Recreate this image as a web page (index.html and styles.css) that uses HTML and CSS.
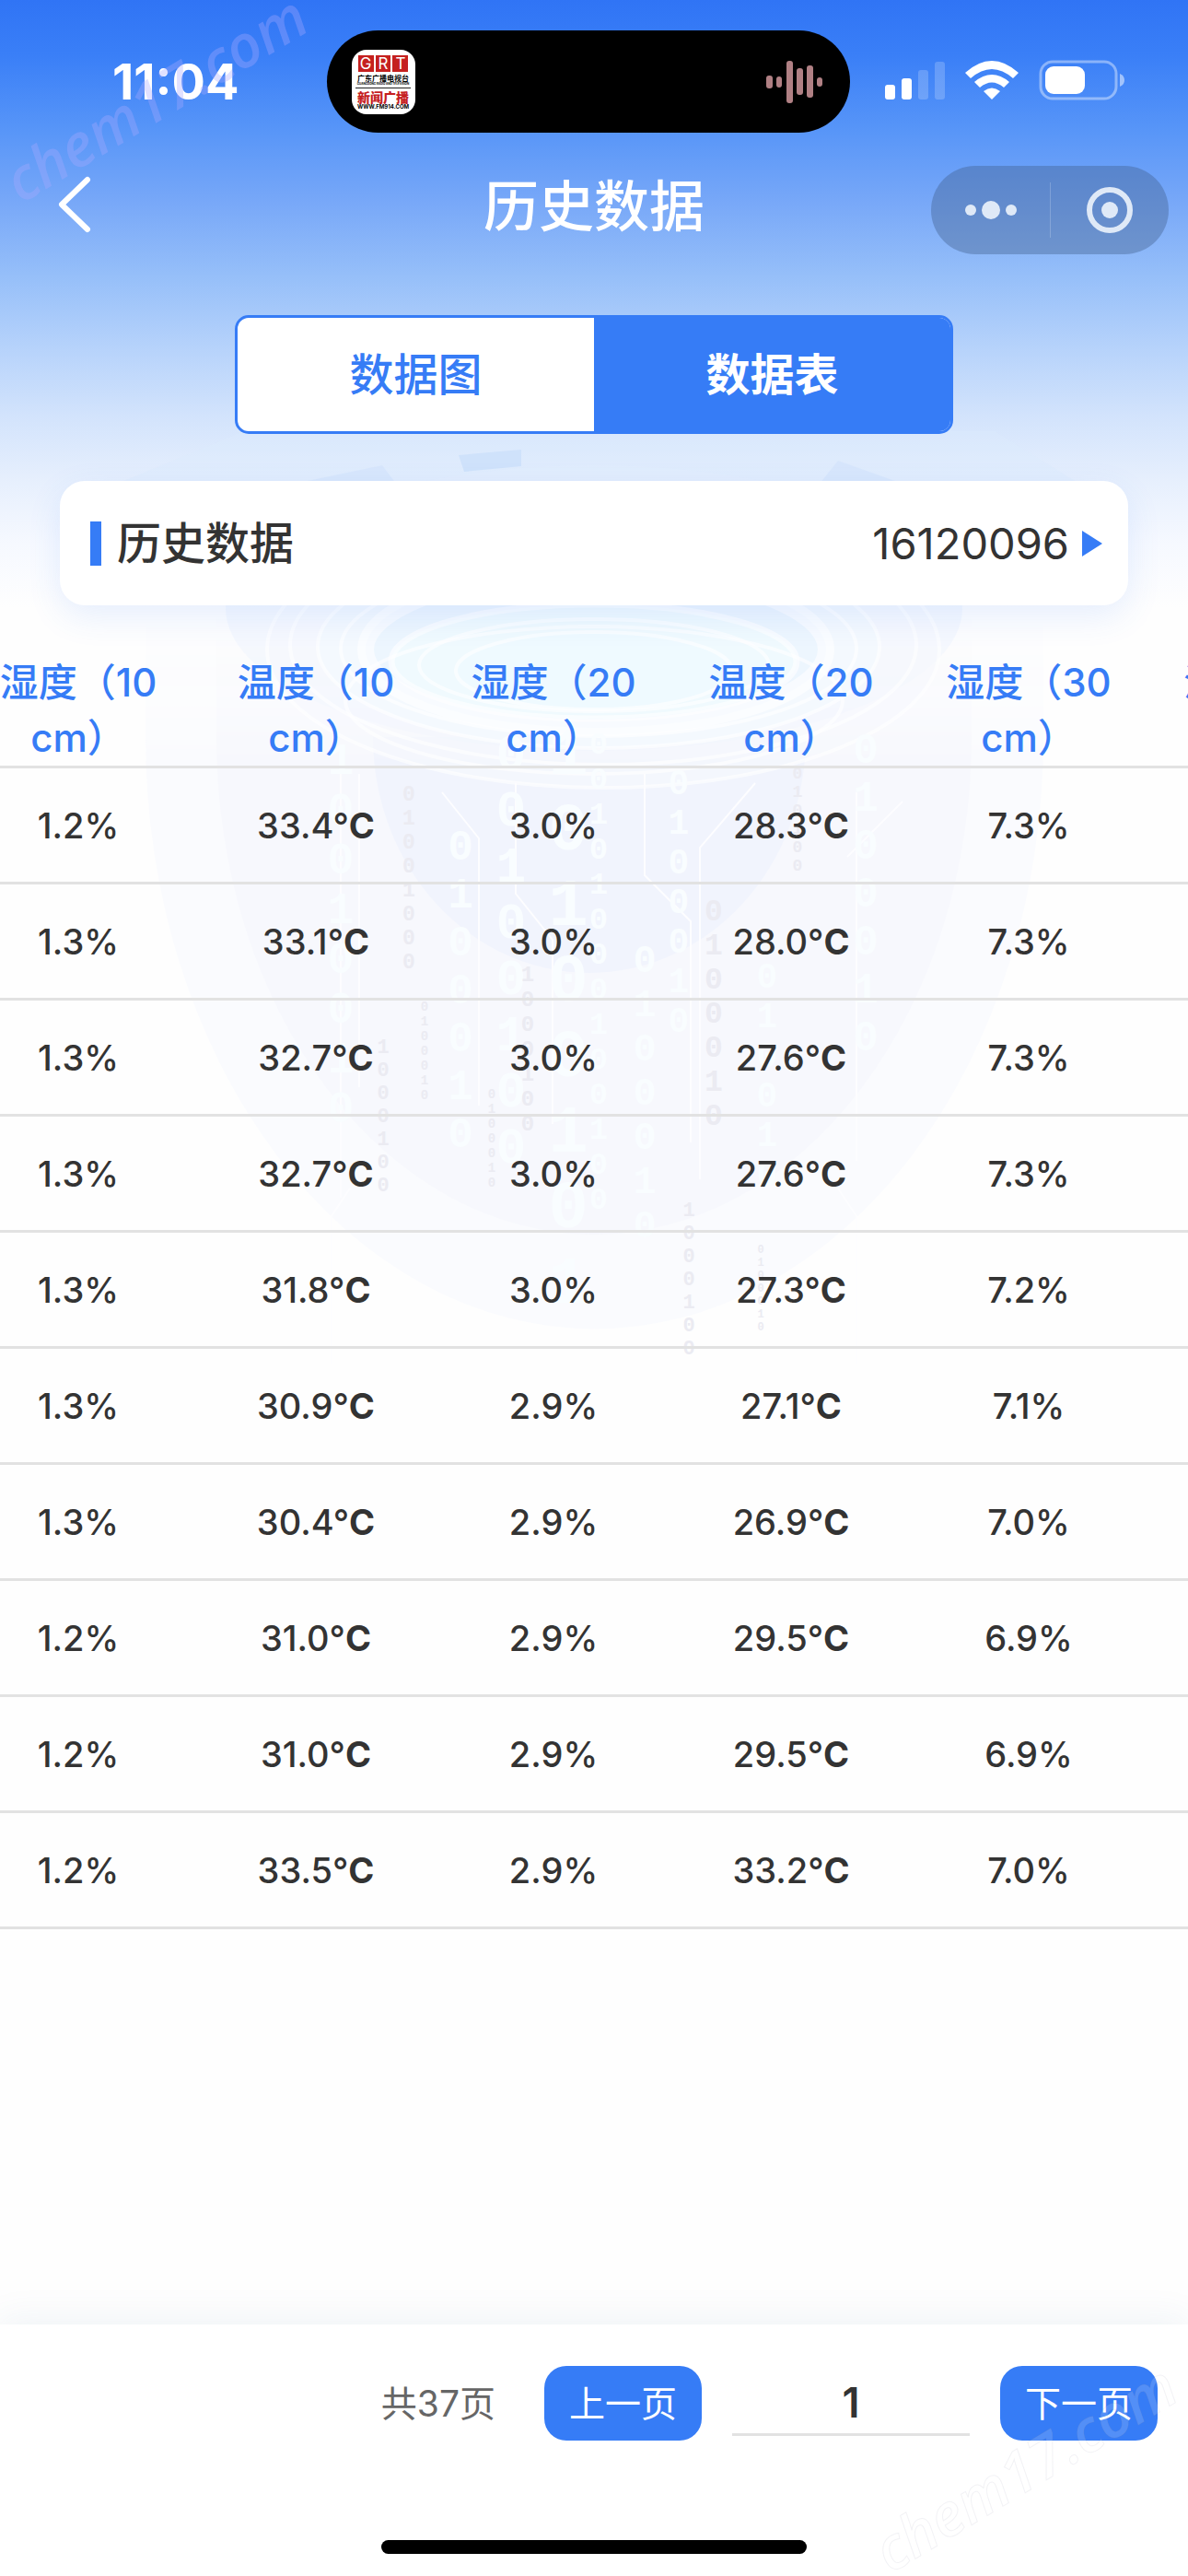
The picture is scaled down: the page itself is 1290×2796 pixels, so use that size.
FILE: index.html
```html
<!DOCTYPE html>
<html lang="zh-CN">
<head>
    <meta charset="UTF-8">
    <meta name="viewport" content="width=device-width, initial-scale=1.0">
    <title>历史数据</title>
    <link rel="stylesheet" href="styles.css">
</head>
<body>
    <svg class="backdrop" viewBox="0 0 1290 1700" aria-hidden="true">
        <defs>
            <linearGradient id="fade" x1="0" y1="660" x2="0" y2="830" gradientUnits="userSpaceOnUse">
                <stop offset="0" stop-color="#fff" stop-opacity="0"/>
                <stop offset="1" stop-color="#fff"/>
            </linearGradient>
            <mask id="fade-in" maskUnits="userSpaceOnUse" x="0" y="600" width="1290" height="1100">
                <rect x="0" y="600" width="1290" height="1100" fill="url(#fade)"/>
            </mask>
        </defs>
        <g mask="url(#fade-in)">
            <path fill="#fafbfe" d="M158 660V800A487 642 0 0 0 1133 800V660Z"/>
            <path fill="#f7f8fd" d="M235 660V800A410 540 0 0 0 1055 800V660Z"/>
            <path fill="#f1f4fd" d="M405 800A235 256 0 0 0 875 800Z"/>
        </g>
        <g class="rings">
            <path d="M115 530 L265 468 H1080 L1180 530Z" fill="#dceafd" fill-opacity=".4" stroke="none"/>
            <path d="M498 494l68-6v18l-62 6z" fill="#cfe2fb" stroke="none"/>
            <path d="M320 525l95-20 15 20zM890 525l20-25 70 25z" fill="#d2e3fc" fill-opacity=".6" stroke="none"/>
            <ellipse cx="645" cy="660" rx="400" ry="155" fill="#e4effe" fill-opacity=".3" stroke="none"/>
            <ellipse cx="655" cy="705" rx="365" ry="150" fill="#f6f9fe" fill-opacity=".6"/>
            <ellipse cx="655" cy="700" rx="340" ry="130"/>
            <ellipse cx="650" cy="702" rx="305" ry="110" fill="#f4f9fe"/>
            <ellipse cx="650" cy="704" rx="280" ry="95"/>
            <ellipse cx="647" cy="705" rx="250" ry="85" fill="#edf6fe" stroke-width="18"/>
            <ellipse cx="645" cy="718" rx="220" ry="62" fill="#f0fafe" stroke-width="7"/>
            <ellipse cx="645" cy="722" rx="190" ry="50"/>
            <ellipse cx="645" cy="728" rx="150" ry="42" fill="#effaff"/>
            <ellipse cx="645" cy="760" rx="270" ry="80"/>
        </g>
        <g class="circuit">
            <path d="M370 840V1300M390 840V1180M480 860l40 50V1200M560 850v120l40 50v200M700 840v110l50 50v240M820 850l-60 70v360M930 860v400M980 870l-60 60M360 1480V1320l20-30M930 1480V1320l-20-30"/>
        </g>
        <g class="bits light">
            <text x="370" y="800" font-size="48">10010010</text>
            <text x="500" y="895" font-size="46">0100010</text>
            <text x="555" y="790" font-size="54">00100100</text>
            <text x="617" y="780" font-size="72">10100101</text>
            <text x="650" y="790" font-size="34">00101000100100</text>
            <text x="700" y="1020" font-size="42">0100010</text>
            <text x="737" y="830" font-size="38">0100010</text>
            <text x="833" y="1040" font-size="38">010010</text>
            <text x="940" y="790" font-size="46">0100010</text>
        </g>
        <g class="bits dark">
            <text x="444" y="850" font-size="23">01001000</text>
            <text x="416" y="1125" font-size="22">1000100</text>
            <text x="461" y="1085" font-size="14">0100010</text>
            <text x="534" y="1180" font-size="14">0100010</text>
            <text x="573" y="1045" font-size="24">1000100</text>
            <text x="775" y="972" font-size="33">0100010</text>
            <text x="748" y="1302" font-size="22">1000100</text>
            <text x="866" y="830" font-size="18">010100</text>
            <text x="826" y="1350" font-size="12">0100010</text>
        </g>
    </svg>

    <div class="page">
        <div class="status-bar">
            <span class="time">11:04</span>
            <div class="island">
                <svg class="app-icon" viewBox="0 0 69 70">
                    <rect width="69" height="70" rx="16" fill="#fff"/>
                    <path fill="#c5201f" d="M7 6h17v18H7zM26 6h16v18H26zM44 6h17v18H44z"/>
                    <g fill="#fff" font-size="17" text-anchor="middle">
                        <text x="15" y="21">G</text>
                        <text x="34" y="21">R</text>
                        <text x="53" y="21">T</text>
                    </g>
                    <g text-anchor="middle" font-weight="700">
                        <text x="34" y="34" font-size="8">广东广播电视台</text>
                        <text x="34" y="38" font-size="3">GUANGDONG RADIO AND TELEVISION</text>
                        <text x="34" y="57" font-size="14" font-weight="900" fill="#c5201f">新闻广播</text>
                        <text x="34" y="64" font-size="6">WWW.FM914.COM</text>
                    </g>
                    <path stroke="#222" d="M4 41.500h60"/>
                </svg>
                <svg class="wave" viewBox="0 0 62 48">
                    <g fill="#b08084">
                        <rect x="0" y="17" width="7" height="14" rx="3"/>
                        <rect x="11" y="18" width="6" height="12" rx="3"/>
                        <rect x="22" y="1" width="7" height="46" rx="3"/>
                        <rect x="33" y="9" width="7" height="29" rx="3"/>
                        <rect x="44" y="6" width="7" height="35" rx="3"/>
                        <rect x="55" y="19" width="6" height="10" rx="3"/>
                    </g>
                </svg>
            </div>
            <div class="indicators">
                <svg width="65" height="42" viewBox="0 0 65 42" fill="#fff">
                    <rect x="0" y="26" width="11" height="16" rx="3"/>
                    <rect x="18" y="19" width="11" height="23" rx="3"/>
                    <rect x="36" y="10" width="11" height="32" rx="3" opacity=".2"/>
                    <rect x="54" y="1" width="11" height="41" rx="3" opacity=".2"/>
                </svg>
                <svg width="58" height="42" viewBox="0 0 58 42" fill="#fff">
                    <path d="M0 13 Q29 -13 58 13 L52 19 Q29 -1 6 19Z"/>
                    <path d="M10 23 Q29 7 48 23 L42 29 Q29 18 16 29Z"/>
                    <path d="M20 33 Q29 26 38 33 L29 42Z"/>
                </svg>
                <svg width="94" height="44" viewBox="0 0 94 44">
                    <rect x="2" y="2" width="82" height="40" rx="13" fill="none" stroke="#fff" stroke-width="3" opacity=".4"/>
                    <rect x="7" y="7" width="43" height="30" rx="9" fill="#fff"/>
                    <path d="M88 15q5 2 5 7t-5 7z" fill="#fff" opacity=".5"/>
                </svg>
            </div>
        </div>

        <div class="nav">
            <button class="back" aria-label="返回">
                <svg width="36" height="62" viewBox="0 0 36 62"><path d="M32 4 L4 31 L32 58"/></svg>
            </button>
            <h1>历史数据</h1>
            <div class="capsule">
                <button aria-label="更多">
                    <svg width="56" height="22" viewBox="0 0 56 22"><circle cx="6" cy="11" r="6"/><circle cx="28" cy="11" r="10"/><circle cx="50" cy="11" r="6"/></svg>
                </button>
                <button aria-label="关闭">
                    <svg width="52" height="52" viewBox="0 0 52 52"><circle cx="26" cy="26" r="22" fill="none" stroke="#dfe9f7" stroke-width="6"/><circle cx="26" cy="26" r="9"/></svg>
                </button>
            </div>
        </div>

        <div class="tabs">
            <button class="tab">数据图</button>
            <button class="tab active">数据表</button>
        </div>

        <div class="card">
            <h2>历史数据</h2>
            <a href="#" class="device">16120096
                <svg width="22" height="28" viewBox="0 0 22 28"><path d="M0 0 L22 14 L0 28Z" fill="#367cf6"/></svg>
            </a>
        </div>

        <div class="table-wrap">
            <table>
                <thead>
                    <tr>
                        <th>湿度（10<br>cm）</th>
                        <th>温度（10<br>cm）</th>
                        <th>湿度（20<br>cm）</th>
                        <th>温度（20<br>cm）</th>
                        <th>湿度（30<br>cm）</th>
                        <th>温度（30<br>cm）</th>
                    </tr>
                </thead>
                <tbody>
                    <tr><td>1.2%</td><td>33.4°<b>C</b></td><td>3.0%</td><td>28.3°<b>C</b></td><td>7.3%</td><td></td></tr>
                    <tr><td>1.3%</td><td>33.1°<b>C</b></td><td>3.0%</td><td>28.0°<b>C</b></td><td>7.3%</td><td></td></tr>
                    <tr><td>1.3%</td><td>32.7°<b>C</b></td><td>3.0%</td><td>27.6°<b>C</b></td><td>7.3%</td><td></td></tr>
                    <tr><td>1.3%</td><td>32.7°<b>C</b></td><td>3.0%</td><td>27.6°<b>C</b></td><td>7.3%</td><td></td></tr>
                    <tr><td>1.3%</td><td>31.8°<b>C</b></td><td>3.0%</td><td>27.3°<b>C</b></td><td>7.2%</td><td></td></tr>
                    <tr><td>1.3%</td><td>30.9°<b>C</b></td><td>2.9%</td><td>27.1°<b>C</b></td><td>7.1%</td><td></td></tr>
                    <tr><td>1.3%</td><td>30.4°<b>C</b></td><td>2.9%</td><td>26.9°<b>C</b></td><td>7.0%</td><td></td></tr>
                    <tr><td>1.2%</td><td>31.0°<b>C</b></td><td>2.9%</td><td>29.5°<b>C</b></td><td>6.9%</td><td></td></tr>
                    <tr><td>1.2%</td><td>31.0°<b>C</b></td><td>2.9%</td><td>29.5°<b>C</b></td><td>6.9%</td><td></td></tr>
                    <tr><td>1.2%</td><td>33.5°<b>C</b></td><td>2.9%</td><td>33.2°<b>C</b></td><td>7.0%</td><td></td></tr>
                </tbody>
            </table>
        </div>

        <footer>
            <div class="pager">
                <label for="page">共37页</label>
                <button>上一页</button>
                <input id="page" type="text" value="1">
                <button>下一页</button>
            </div>
            <div class="home-bar"></div>
        </footer>
    </div>

    <span class="watermark top">chem17.com</span>
    <span class="watermark bottom">chem17.com</span>
</body>
</html>
```
FILE: styles.css
```css
* {
    box-sizing: border-box;
}
body {
    margin: 0;
    position: relative;
    overflow-x: hidden;
    font-family: Inter, "Noto Sans CJK SC", sans-serif;
    color: #333;
    background: #fefefe linear-gradient(#3074f5 0, #3a7ff7 60px, #5795f8 140px, #78a8f8 220px, #96bff9 300px, #b7d3fb 380px, #d2e3fc 450px, #e6effd 520px, #f6f9ff 590px, #fefefe 660px) no-repeat;
}
button {
    border: none;
    padding: 0;
    background: none;
    font-family: inherit;
    cursor: pointer;
}
svg {
    display: block;
}
.backdrop {
    position: absolute;
    top: 0;
    left: 0;
    width: 100%;
}
.rings {
    fill: none;
    stroke: #fff;
    stroke-width: 4;
    stroke-opacity: 0.6;
}
.circuit {
    fill: none;
    stroke: #fdfdff;
    stroke-width: 2;
}
.bits {
    font-family: "Liberation Mono", monospace;
    font-weight: bold;
    writing-mode: vertical-rl;
    text-orientation: upright;
}
.bits.light {
    fill: #f9fdff;
}
.bits.dark {
    fill: #ebebf2;
}
.page {
    position: relative;
    min-height: 100vh;
    display: flex;
    flex-direction: column;
}

/* status bar */
.status-bar {
    display: grid;
    grid-template-columns: 355px 568px 1fr;
    align-items: center;
    padding-top: 33px;
    color: #fff;
}
.time {
    padding-left: 122px;
    font-size: 54px;
    font-weight: 700;
}
.island {
    height: 111px;
    padding: 0 29px 0 27px;
    border-radius: 56px;
    background: #000;
    display: flex;
    align-items: center;
    justify-content: space-between;
}
.app-icon {
    width: 69px;
    height: 70px;
}
.wave {
    width: 62px;
    height: 48px;
}
.indicators {
    display: flex;
    align-items: center;
    gap: 22px;
    padding: 0 0 4px 38px;
}

/* nav */
.nav {
    display: grid;
    grid-template-columns: 258px 1fr 258px;
    align-items: center;
    height: 96px;
    margin: 36px 21px 0;
}
.back {
    justify-self: start;
    margin: -12px 0 0 42px;
}
.back svg {
    fill: none;
    stroke: #fff;
    stroke-width: 6;
    stroke-linecap: round;
    stroke-linejoin: round;
}
h1 {
    margin: 0;
    padding-bottom: 8px;
    color: #fff;
    font-size: 60px;
    font-weight: 500;
    line-height: 88px;
    text-align: center;
}
.capsule {
    height: 96px;
    border-radius: 48px;
    background: rgba(65, 95, 140, 0.4);
    display: grid;
    grid-template-columns: 1fr 1fr;
    align-items: center;
}
.capsule button {
    height: 60px;
    display: flex;
    align-items: center;
    justify-content: center;
}
.capsule button + button {
    border-left: 1px solid rgba(255, 255, 255, 0.2);
}
.capsule svg {
    fill: #dfe9f7;
}

/* tabs */
.tabs {
    display: flex;
    width: 780px;
    height: 129px;
    margin: 66px auto 0;
    border: 3px solid #367cf6;
    border-radius: 15px;
    background: #fff;
    overflow: hidden;
}
.tab {
    flex: 1;
    padding-bottom: 8px;
    font-size: 48px;
    font-weight: 500;
    color: #367cf6;
}
.tab.active {
    background: #367cf6;
    color: #fff;
    font-weight: 700;
}

.card {
    display: flex;
    align-items: center;
    justify-content: space-between;
    height: 135px;
    margin: 51px 65px 0;
    padding: 0 28px 0 33px;
    border-radius: 27px;
    background: #fff;
    box-shadow: 0 12px 36px rgba(54, 124, 246, 0.12);
}
h2 {
    margin: 0;
    padding-left: 17px;
    border-left: 12px solid #367cf6;
    font-size: 48px;
    font-weight: 500;
    line-height: 48px;
}
.device {
    display: flex;
    align-items: center;
    gap: 14px;
    font-size: 47px;
    color: #333;
    text-decoration: none;
}

/* table */
.table-wrap {
    flex: 1;
    margin-top: 48px;
    overflow: hidden;
}
table {
    width: 120%;
    margin-left: -44px;
    table-layout: fixed;
    border-collapse: separate;
    border-spacing: 0;
}
th,
td {
    padding: 0;
    text-align: center;
    font-weight: 500;
    border-bottom: 3px solid #e2e2e2;
}
th {
    height: 129px;
    padding-top: 6px;
    font-size: 42px;
    line-height: 60px;
    color: #367cf6;
}
td {
    height: 126px;
    font-size: 38px;
}

/* footer */
footer {
    background: #fff;
    box-shadow: 0 -6px 36px rgba(70, 110, 150, 0.08);
    padding: 45px 33px 24px;
}
.pager {
    display: flex;
    align-items: center;
    justify-content: flex-end;
    gap: 33px;
}
.pager label {
    margin-right: 20px;
    padding-bottom: 6px;
    font-size: 39px;
    color: #666;
}
.pager button {
    width: 171px;
    height: 81px;
    padding-bottom: 6px;
    border-radius: 24px;
    background: #367cf6;
    color: #fff;
    font-size: 39px;
}
.pager input {
    width: 258px;
    height: 70px;
    padding: 0;
    border: none;
    border-bottom: 3px solid #e2e2e2;
    background: none;
    text-align: center;
    font-family: inherit;
    font-size: 45px;
    font-weight: 600;
    color: #333;
}
.home-bar {
    width: 462px;
    height: 15px;
    margin: 108px auto 0;
    border-radius: 8px;
    background: #000;
}

.watermark {
    position: absolute;
    font-family: "Open Sans", sans-serif;
    font-size: 64px;
    font-weight: 600;
    font-style: italic;
    line-height: 1;
    color: rgba(170, 170, 255, 0.35);
    transform: rotate(-31deg);
    pointer-events: none;
}
.watermark.top {
    top: 74px;
    left: -16px;
}
.watermark.bottom {
    right: -8px;
    bottom: 86px;
    color: rgba(255, 255, 255, 0.15);
    -webkit-text-stroke: 1px rgba(150, 150, 170, 0.12);
}
```
